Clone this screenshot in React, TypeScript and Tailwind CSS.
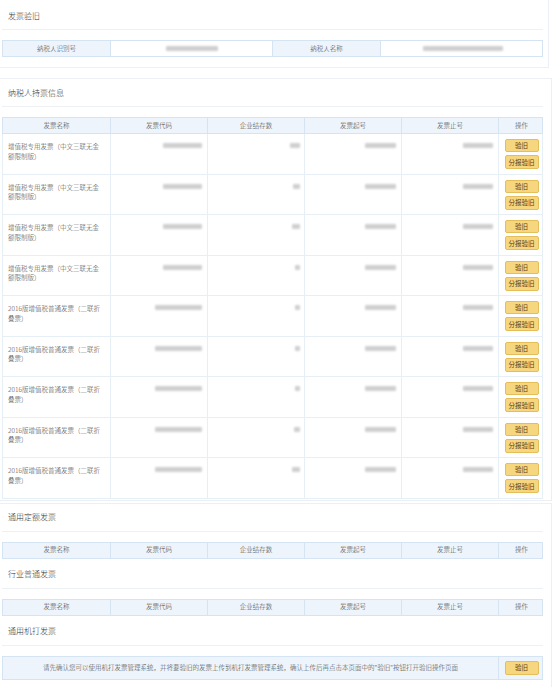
import React from "react";

type Row = { name: [string, string]; code: number; stock: number; start: number; end: number };

const rows: Row[] = [
  { name: ["增值税专用发票（中文三联无金", "额限制版）"], code: 39, stock: 10, start: 31, end: 30 },
  { name: ["增值税专用发票（中文三联无金", "额限制版）"], code: 39, stock: 7, start: 31, end: 30 },
  { name: ["增值税专用发票（中文三联无金", "额限制版）"], code: 39, stock: 8, start: 31, end: 30 },
  { name: ["增值税专用发票（中文三联无金", "额限制版）"], code: 39, stock: 5, start: 31, end: 30 },
  { name: ["2016版增值税普通发票（二联折", "叠票）"], code: 47, stock: 5, start: 31, end: 30 },
  { name: ["2016版增值税普通发票（二联折", "叠票）"], code: 47, stock: 5, start: 31, end: 30 },
  { name: ["2016版增值税普通发票（二联折", "叠票）"], code: 47, stock: 5, start: 31, end: 30 },
  { name: ["2016版增值税普通发票（二联折", "叠票）"], code: 47, stock: 6, start: 31, end: 30 },
  { name: ["2016版增值税普通发票（二联折", "叠票）"], code: 47, stock: 8, start: 31, end: 30 },
];

const headers = ["发票名称", "发票代码", "企业结存数", "发票起号", "发票止号", "操作"];

function Blur({ w }: { w: number }) {
  return (
    <span
      className="inline-block h-[5px] bg-[#cfcfcf] blur-[1.2px] rounded-[1px]"
      style={{ width: w }}
    />
  );
}

function Btn({ children, h = "h-[13px]" }: { children: React.ReactNode; h?: string }) {
  return (
    <div
      className={`w-[34px] ${h} flex items-center justify-center bg-[#f6d780] border border-[#e4be5a] rounded-[2px] text-[6.5px] font-normal text-[#5a4018] leading-none`}
    >
      {children}
    </div>
  );
}

function Title({ children }: { children: React.ReactNode }) {
  return (
    <div className="h-[28px] flex items-center border-b border-[#eef1f4] pl-[6px] text-[8px] text-[#333]">
      {children}
    </div>
  );
}

function HeaderRow() {
  return (
    <div className="grid grid-cols-[108px_97px_97px_97px_97px_45px] h-[17px] bg-[#edf4fb] border border-[#d4e4f2]">
      {headers.map((h, i) => (
        <div
          key={h}
          className={`flex items-center justify-center text-[6.5px] text-[#444] ${i < 5 ? "border-r border-[#d4e4f2]" : ""}`}
        >
          {h}
        </div>
      ))}
    </div>
  );
}

export default function App() {
  return (
    <div className="w-[554px] h-[687px] overflow-hidden bg-white font-light font-['Noto_Sans_CJK_SC','Liberation_Sans',sans-serif]">
      {/* Card 1 */}
      <div className="w-[549px] border-r border-b border-[#eceff3] pt-[2px] pb-[10px]">
        <div className="w-[543px] pl-[2px]">
          <Title>发票验旧</Title>
          <div className="mt-[10px] grid grid-cols-[108px_162px_108px_163px] h-[17px] border border-[#d4e4f2]">
            <div className="bg-[#edf4fb] border-r border-[#d4e4f2] flex items-center justify-center text-[6.5px] text-[#444]">
              纳税人识别号
            </div>
            <div className="border-r border-[#d4e4f2] flex items-center justify-center">
              <Blur w={52} />
            </div>
            <div className="bg-[#edf4fb] border-r border-[#d4e4f2] flex items-center justify-center text-[6.5px] text-[#444]">
              纳税人名称
            </div>
            <div className="flex items-center justify-center">
              <Blur w={80} />
            </div>
          </div>
        </div>
      </div>

      {/* Card 2 */}
      <div className="mt-[10px] w-[552px] border-t border-r border-b border-[#eceff3] pb-[1px]">
        <div className="w-[543px] pl-[2px]">
          <Title>纳税人持票信息</Title>
          <div className="mt-[10px]">
            <HeaderRow />
            {rows.map((r, i) => (
              <div
                key={i}
                className="grid grid-cols-[108px_97px_97px_97px_97px_45px] h-[40.5px] border-l border-r border-b border-[#e6eef6]"
              >
                <div className="border-r border-[#e6eef6] px-[5px] pt-[8px] text-[6.5px] leading-[9.5px] text-[#444]">
                  <div>{r.name[0]}</div>
                  <div>{r.name[1]}</div>
                </div>
                <div className="border-r border-[#e6eef6] flex justify-end pr-[5px] pt-[9px]">
                  <Blur w={r.code} />
                </div>
                <div className="border-r border-[#e6eef6] flex justify-end pr-[4px] pt-[9px]">
                  <Blur w={r.stock} />
                </div>
                <div className="border-r border-[#e6eef6] flex justify-end pr-[5px] pt-[9px]">
                  <Blur w={r.start} />
                </div>
                <div className="border-r border-[#e6eef6] flex justify-end pr-[5px] pt-[9px]">
                  <Blur w={r.end} />
                </div>
                <div className="flex flex-col items-center pt-[5px] gap-[3px]">
                  <Btn>验旧</Btn>
                  <Btn h="h-[14px]">分报验旧</Btn>
                </div>
              </div>
            ))}
          </div>
        </div>
      </div>

      {/* Card 3 */}
      <div className="mt-[2px] w-[552px] border-t border-r border-[#eceff3] pb-[10px]">
        <div className="w-[543px] pl-[2px]">
          <Title>通用定额发票</Title>
          <div className="mt-[10px]">
            <HeaderRow />
          </div>
          <div className="mt-[2px]">
            <Title>行业普通发票</Title>
          </div>
          <div className="mt-[10px]">
            <HeaderRow />
          </div>
          <div className="mt-[2px]">
            <Title>通用机打发票</Title>
          </div>
          <div className="mt-[10px] grid grid-cols-[496px_45px] h-[24px] bg-[#edf4fb] border border-[#d4e4f2]">
            <div className="border-r border-[#d4e4f2] flex items-center justify-center text-[6.5px] text-[#444]">
              请先确认您可以使用机打发票管理系统，并将要验旧的发票上传到机打发票管理系统，确认上传后再点击本页面中的"验旧"按钮打开验旧操作页面
            </div>
            <div className="flex items-center justify-center">
              <Btn h="h-[14px]">验旧</Btn>
            </div>
          </div>
        </div>
      </div>
    </div>
  );
}
